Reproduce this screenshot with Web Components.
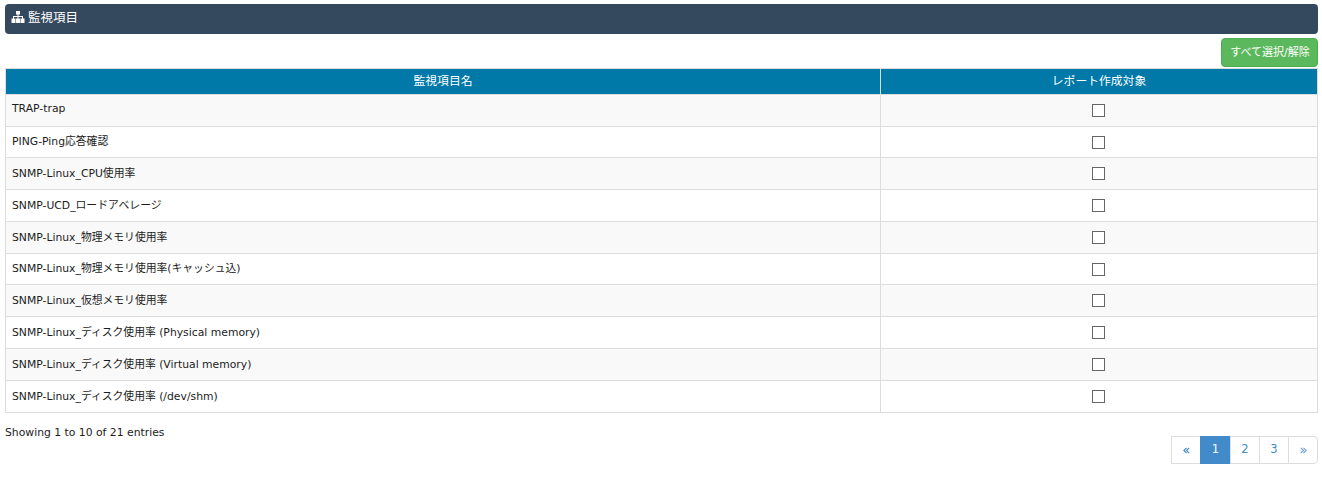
<!DOCTYPE html>
<html lang="ja">
<head>
<meta charset="utf-8">
<style>
  html, body { margin: 0; background: #fff; }
  body { font-family: "DejaVu Sans", "Noto Sans CJK JP", sans-serif; font-size: 10.8px; color: #1c1c1c; }
</style>
</head>
<body>
<monitor-page></monitor-page>
<script>
const ITEMS = [
  'TRAP-trap',
  'PING-Ping応答確認',
  'SNMP-Linux_CPU使用率',
  'SNMP-UCD_ロードアベレージ',
  'SNMP-Linux_物理メモリ使用率',
  'SNMP-Linux_物理メモリ使用率(キャッシュ込)',
  'SNMP-Linux_仮想メモリ使用率',
  'SNMP-Linux_ディスク使用率 (Physical memory)',
  'SNMP-Linux_ディスク使用率 (Virtual memory)',
  'SNMP-Linux_ディスク使用率 (/dev/shm)'
];

class PanelHeading extends HTMLElement {
  constructor() {
    super();
    this.attachShadow({ mode: 'open' });
    this.shadowRoot.innerHTML = `
      <style>
        :host {
          display: flex;
          align-items: center;
          gap: 3px;
          height: 30px;
          padding: 0 6px;
          background: #34495e;
          border-radius: 4px;
          color: #fff;
          font-size: 12.5px;
        }
        svg { width: 14px; height: 12px; fill: #fff; display: block; margin-top: -4px; }
        span { margin-top: -6px; }
      </style>
      <svg viewBox="0 0 14 12">
        <path d="M5 0h4v3.5H7.5V5H12v2.5h1.5V12h-4V7.5H11V6H7.5v1.5H9V12H5V7.500h1.500V6H3v1.500h1.500V12h-4V7.500H2V5h4.500V3.500H5z"/>
      </svg>
      <span><slot></slot></span>
    `;
  }
}

class ActionButton extends HTMLElement {
  constructor() {
    super();
    this.attachShadow({ mode: 'open' });
    this.shadowRoot.innerHTML = `
      <style>
        :host {
          display: flex;
          align-items: center;
          justify-content: center;
          width: 97px;
          height: 29px;
          box-sizing: border-box;
          padding: 0 0 4px 1px;
          background: #5cb85c;
          border: 1px solid #4cae4c;
          border-radius: 4px;
          color: #fff;
          font-size: 11px;
        }
      </style>
      <slot></slot>
    `;
  }
}

class ItemTable extends HTMLElement {
  constructor() {
    super();
    this.attachShadow({ mode: 'open' });
    const rows = ITEMS.map(name => `
      <tr><td>${name}</td><td class="check"><span class="box"></span></td></tr>
    `).join('');
    this.shadowRoot.innerHTML = `
      <style>
        :host { display: block; }
        table {
          width: 100%;
          table-layout: fixed;
          border-collapse: collapse;
          border: 1px solid #ddd;
        }
        th {
          height: 26px;
          padding: 0 0 4px;
          box-sizing: border-box;
          background: #0078a8;
          color: #fff;
          font-size: 11.8px;
          font-weight: 400;
          border-right: 1px solid #ddd;
          border-top: 1px solid #ddd;
        }
        td {
          box-sizing: border-box;
          height: 32px;
          padding: 0 6px 4px;
          border: 1px solid #ddd;
        }
        tbody tr:nth-child(2) td, tbody tr:nth-child(6) td { height: 31px; }
        tr:nth-child(odd) td { background: #f9f9f9; }
        td.check { text-align: center; padding: 0; }
        .box {
          display: block;
          box-sizing: border-box;
          width: 13px;
          height: 13px;
          margin: 0 auto;
          transform: translateX(-1px);
          background: #fff;
          border: 1px solid #666;
        }
      </style>
      <table>
        <colgroup><col style="width: 875px"><col></colgroup>
        <thead><tr><th>監視項目名</th><th>レポート作成対象</th></tr></thead>
        <tbody>${rows}</tbody>
      </table>
    `;
  }
}

class PageList extends HTMLElement {
  constructor() {
    super();
    this.attachShadow({ mode: 'open' });
    this.shadowRoot.innerHTML = `
      <style>
        :host {
          display: flex;
          height: 28px;
          font-size: 11.5px;
          color: #428bca;
        }
        a {
          display: flex;
          align-items: center;
          justify-content: center;
          box-sizing: border-box;
          width: 30px;
          margin-left: -1px;
          padding-bottom: 2px;
          background: #fff;
          border: 1px solid #ddd;
        }
        a:first-child { width: 29px; margin-left: 0; border-radius: 4px 0 0 4px; color: #8a8a8a; }
        a:last-child { border-radius: 0 4px 4px 0; color: #6fa5d6; }
        a.on { width: 31px; background: #428bca; border-color: #428bca; color: #fff; }
        svg { width: 7px; height: 7px; fill: none; stroke: currentColor; stroke-width: 1.3; display: block; margin-top: 2px; }
      </style>
      <a><svg viewBox="0 0 8 8"><path d="M4 1 1 4l3 3M7 1 4 4l3 3"/></svg></a>
      <a class="on">1</a><a>2</a><a>3</a>
      <a><svg viewBox="0 0 8 8"><path d="M1 1l3 3-3 3M4 1l3 3-3 3"/></svg></a>
    `;
  }
}

class MonitorPage extends HTMLElement {
  constructor() {
    super();
    this.attachShadow({ mode: 'open' });
    this.shadowRoot.innerHTML = `
      <style>
        :host { display: block; padding: 4px 4px 0 5px; }
        .tools { display: flex; justify-content: flex-end; margin: 4px 0 1px; }
        .info { margin-top: 13px; line-height: 14px; }
        .pager { display: flex; justify-content: flex-end; margin-top: -4px; }
      </style>
      <panel-heading>監視項目</panel-heading>
      <div class="tools"><action-button>すべて選択/解除</action-button></div>
      <item-table></item-table>
      <div class="info">Showing 1 to 10 of 21 entries</div>
      <div class="pager"><page-list></page-list></div>
    `;
  }
}

customElements.define('panel-heading', PanelHeading);
customElements.define('action-button', ActionButton);
customElements.define('item-table', ItemTable);
customElements.define('page-list', PageList);
customElements.define('monitor-page', MonitorPage);
</script>
</body>
</html>
